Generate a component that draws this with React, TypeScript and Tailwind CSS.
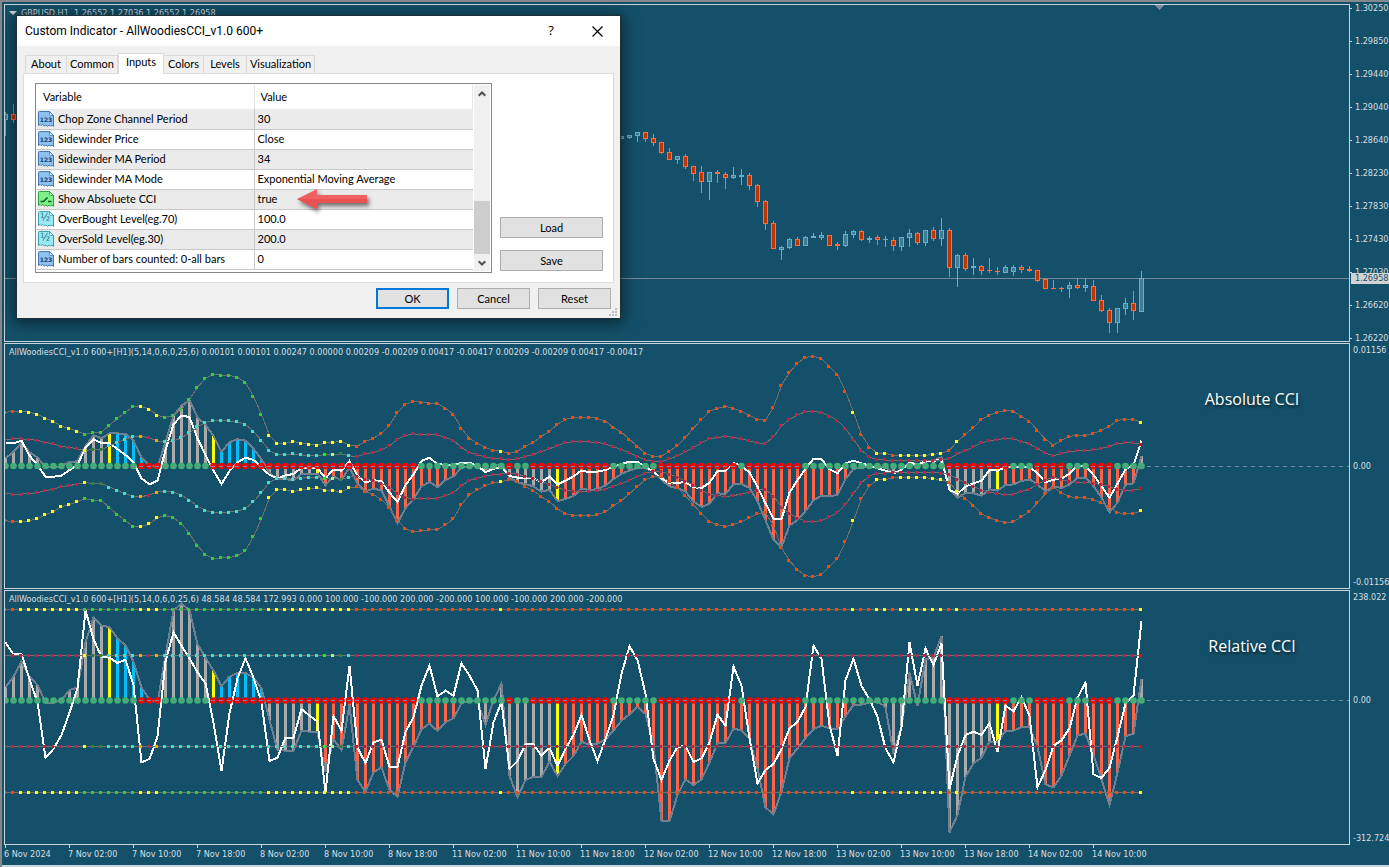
import type { ReactNode } from 'react';
import clsx from 'clsx';

const STEP = 8;

// Curve samples, one per bar, in thirds of a pixel from the top of the pane
const outerBand = [
    217, 214, 214, 217, 223, 235, 244, 259, 265, 274, 283, 277, 277, 256, 235, 217, 199, 199, 208, 226, 232, 226, 208, 178, 142, 115, 103, 106, 106, 112, 127, 169, 223, 286, 310, 310, 304, 310, 313,
    316, 307, 307, 304, 316, 319, 304, 295, 280, 256, 217, 193, 184, 187, 190, 190, 205, 223, 265, 295, 310, 322, 331, 334, 340, 334, 319, 307, 289, 274, 253, 238, 232, 232, 232, 235, 244, 262, 277,
    298, 319, 340, 349, 349, 334, 316, 292, 265, 238, 214, 205, 199, 205, 214, 226, 238, 241, 202, 136, 97, 70, 52, 49, 55, 79, 103, 154, 217, 283, 322, 340, 340, 346, 346, 346, 346, 346, 343, 340,
    331, 304, 283, 262, 238, 226, 217, 211, 214, 229, 244, 271, 298, 316, 301, 289, 286, 286, 280, 271, 259, 241, 238, 238, 247,
];

const cci = [
    307, 275, 230, 275, 300, 353, 353, 345, 315, 308, 172, 97, 122, 126, 160, 182, 230, 308, 343, 353, 212, 76, 56, 76, 178, 218, 257, 304, 275, 264, 264, 278, 310, 405, 495, 497, 497, 437, 440, 440,
    560, 463, 495, 360, 585, 620, 562, 547, 615, 635, 532, 485, 433, 415, 438, 412, 400, 355, 348, 347, 420, 345, 296, 572, 636, 585, 575, 576, 530, 573, 537, 513, 470, 480, 476, 463, 437, 407, 388,
    366, 387, 480, 708, 708, 630, 583, 600, 583, 533, 474, 474, 431, 436, 462, 550, 667, 688, 620, 520, 490, 460, 432, 422, 430, 432, 394, 360, 359, 352, 348, 366, 505, 425, 263, 363, 222, 218, 154,
    742, 690, 575, 535, 518, 470, 470, 438, 437, 427, 426, 485, 598, 607, 572, 512, 451, 446, 510, 583, 660, 563, 454, 446, 282,
];

const turbo = [
    172, 208, 207, 282, 352, 519, 492, 450, 383, 310, 76, 162, 216, 218, 234, 224, 300, 532, 522, 455, 230, 142, 182, 220, 262, 295, 415, 558, 385, 280, 220, 278, 352, 528, 518, 458, 459, 372, 392,
    410, 622, 393, 437, 242, 488, 534, 472, 464, 546, 546, 440, 397, 302, 242, 334, 317, 332, 235, 272, 316, 552, 412, 350, 552, 528, 478, 478, 513, 487, 543, 492, 450, 390, 465, 528, 463, 390, 266,
    184, 225, 327, 522, 585, 527, 486, 483, 531, 520, 472, 389, 422, 245, 302, 460, 595, 555, 537, 492, 430, 411, 366, 182, 222, 420, 512, 286, 221, 303, 343, 395, 490, 532, 425, 172, 302, 191, 240,
    176, 612, 512, 450, 440, 450, 414, 501, 362, 379, 336, 392, 607, 555, 482, 466, 430, 338, 293, 568, 579, 548, 455, 355, 332, 108,
];

const turboAbsolute = [
    310, 310, 302, 347, 375, 410, 410, 407, 390, 375, 322, 298, 309, 310, 327, 345, 367, 415, 433, 422, 330, 253, 227, 231, 295, 345, 392, 432, 393, 367, 353, 360, 382, 405, 415, 406, 402, 384, 383,
    385, 415, 388, 392, 363, 407, 427, 421, 423, 458, 486, 435, 403, 363, 353, 373, 374, 375, 369, 368, 378, 396, 387, 380, 408, 413, 413, 415, 426, 410, 433, 422, 409, 391, 397, 395, 390, 380, 372,
    365, 366, 380, 395, 415, 430, 428, 427, 442, 444, 428, 393, 393, 369, 377, 398, 440, 490, 537, 537, 458, 420, 387, 356, 357, 388, 400, 370, 362, 370, 377, 385, 392, 400, 390, 367, 374, 364, 364,
    357, 450, 461, 440, 430, 422, 390, 392, 382, 381, 380, 381, 400, 427, 419, 417, 400, 377, 378, 405, 438, 473, 430, 388, 375, 302,
];

// [first bar, colour] runs
type Run = [number, string];

const barRuns: Run[] = [
    [0, '#a9a9a9'], [13, '#ffff00'], [14, '#00bfff'], [20, '#a9a9a9'], [26, '#ffff00'], [27, '#00bfff'], [33, '#a9a9a9'], [39, '#ffff00'], [40, '#ff6347'],
    [60, '#a9a9a9'], [69, '#ffff00'], [70, '#ff6347'], [110, '#a9a9a9'], [124, '#ffff00'], [125, '#ff6347'], [142, '#a9a9a9'],
];

const zeroRuns: Run[] = [
    [0, '#3cb371'], [17, '#ff0000'], [20, '#3cb371'], [26, '#ff0000'], [52, '#3cb371'], [63, '#ff0000'], [64, '#3cb371'], [66, '#ff0000'], [76, '#3cb371'], [82, '#ff0000'],
    [92, '#3cb371'], [93, '#ff0000'], [100, '#3cb371'], [118, '#ff0000'], [126, '#3cb371'], [129, '#ff0000'], [133, '#3cb371'], [136, '#ff0000'], [139, '#3cb371'],
];

const outerRuns: Run[] = [
    [0, '#ff4500'], [2, '#ffff00'], [10, '#32cd32'], [17, '#ffff00'], [20, '#32cd32'], [33, '#ffff00'], [44, '#ff4500'], [62, '#ffff00'], [63, '#ff4500'], [106, '#ffff00'],
    [107, '#ff4500'], [109, '#ffff00'], [111, '#ff4500'], [112, '#ffff00'], [118, '#ff4500'], [119, '#ffff00'], [120, '#ff4500'], [142, '#ffff00'],
];

const innerRuns: Run[] = [
    [0, '#dc143c'], [10, '#ffff00'], [11, '#228b22'], [13, '#40e0d0'], [17, '#ffa500'], [18, '#dc143c'], [19, '#ffa500'], [20, '#40e0d0'], [40, '#00ff00'],
    [41, '#98fb98'], [42, '#228b22'], [43, '#40e0d0'], [44, '#dc143c'], [142, '#ff0000'],
];

// first bar, then high, body top, body bottom, low
type Candle = [number, number, number, number, number, 'up' | 'down'];

const candles: Candle[] = [
    [0, 2, 4, 10, 26, 'up'], [1, -6, 4, 10, 13, 'down'], [77, 26, 26, 29, 29, 'up'], [78, 25, 25, 28, 29, 'up'], [79, 22, 22, 26, 32, 'up'],
    [80, 22, 22, 29, 32, 'down'], [81, 24, 28, 33, 36, 'down'], [82, 32, 32, 43, 44, 'down'], [83, 38, 42, 50, 50, 'down'], [84, 46, 46, 50, 54, 'up'],
    [85, 44, 46, 57, 59, 'down'], [86, 56, 56, 64, 71, 'down'], [87, 56, 62, 72, 83, 'down'], [88, 62, 62, 72, 90, 'up'], [89, 60, 62, 64, 73, 'down'],
    [90, 62, 64, 68, 79, 'down'], [91, 57, 65, 68, 69, 'up'], [92, 59, 65, 67, 75, 'up'], [93, 63, 65, 76, 80, 'down'], [94, 74, 75, 92, 97, 'down'],
    [95, 90, 91, 114, 120, 'down'], [96, 111, 113, 139, 139, 'down'], [97, 136, 137, 140, 150, 'up'], [98, 128, 129, 138, 139, 'up'], [99, 127, 129, 136, 136, 'down'],
    [100, 126, 127, 136, 136, 'up'], [101, 123, 126, 128, 128, 'up'], [102, 122, 125, 128, 130, 'up'], [103, 125, 125, 136, 136, 'down'], [104, 132, 134, 136, 140, 'down'],
    [105, 121, 124, 136, 137, 'up'], [106, 120, 121, 125, 128, 'up'], [107, 120, 121, 130, 131, 'down'], [108, 126, 128, 130, 133, 'up'], [109, 125, 127, 130, 135, 'down'],
    [110, 126, 129, 130, 137, 'up'], [111, 127, 130, 136, 141, 'down'], [112, 127, 127, 137, 141, 'up'], [113, 119, 123, 128, 137, 'up'], [114, 122, 123, 133, 135, 'down'],
    [115, 120, 120, 133, 136, 'up'], [116, 117, 120, 129, 131, 'down'], [117, 108, 120, 129, 136, 'up'], [118, 118, 120, 158, 167, 'down'], [119, 144, 145, 158, 177, 'up'],
    [120, 143, 145, 159, 161, 'down'], [121, 148, 156, 158, 165, 'up'], [122, 155, 156, 161, 165, 'down'], [123, 148, 160, 161, 163, 'down'], [124, 157, 161, 162, 165, 'down'],
    [125, 155, 157, 163, 163, 'up'], [126, 155, 157, 162, 166, 'up'], [127, 155, 157, 160, 163, 'down'], [128, 156, 159, 161, 162, 'down'], [129, 160, 160, 171, 172, 'down'],
    [130, 169, 169, 179, 179, 'down'], [131, 170, 178, 179, 179, 'down'], [132, 177, 178, 179, 182, 'down'], [133, 172, 175, 179, 188, 'up'], [134, 168, 175, 178, 179, 'down'],
    [135, 169, 175, 178, 182, 'up'], [136, 170, 176, 191, 191, 'down'], [137, 185, 190, 201, 202, 'down'], [138, 198, 200, 213, 223, 'down'], [139, 198, 198, 213, 223, 'up'],
    [140, 188, 193, 199, 205, 'up'], [141, 181, 193, 201, 210, 'down'], [142, 161, 168, 202, 202, 'up'],
];

const prices = ['1.30250', '1.29850', '1.29440', '1.29040', '1.28640', '1.28230', '1.27830', '1.27430', '1.27030', '1.26620', '1.26220'];

const times = [
    '6 Nov 2024', '7 Nov 02:00', '7 Nov 10:00', '7 Nov 18:00', '8 Nov 02:00', '8 Nov 10:00', '8 Nov 18:00', '11 Nov 02:00', '11 Nov 10:00',
    '11 Nov 18:00', '12 Nov 02:00', '12 Nov 10:00', '12 Nov 18:00', '13 Nov 02:00', '13 Nov 10:00', '13 Nov 18:00', '14 Nov 02:00', '14 Nov 10:00',
];

const colorAt = (runs: Run[], i: number) => {
    let color = runs[0][1];
    for (const [from, c] of runs) if (from <= i) color = c;
    return color;
};

const toPoints = (ys: number[]) => ys.map((y, i) => `${i * STEP + 0.5},${y}`).join(' ');

const BandLine = ({ ys, runs }: { ys: number[]; runs: Run[] }) => (
    <>
        <polyline points={toPoints(ys)} fill="none" stroke="#736e6e" strokeWidth="1" />
        {ys.map((y, i) => (
            <rect key={i} x={i * STEP - 2} y={Math.round(y - 1.5)} width="3" height="3" fill={colorAt(runs, i)} />
        ))}
    </>
);

type CciChartProps = { zero: number; slow: number[]; fast: number[]; inner: number[]; outer: number[] };

const CciChart = ({ zero, slow, fast, inner, outer }: CciChartProps) => {
    const mirror = (ys: number[]) => ys.map((y) => 2 * zero - y);
    const zeroLine = Math.round(zero) - 0.5;
    return (
        <svg className="block h-full w-full" shapeRendering="crispEdges" aria-hidden="true">
            {slow.map((y, i) => (
                <rect key={i} x={i * STEP - 1} y={Math.min(y, zero)} width="3" height={Math.abs(y - zero)} fill={colorAt(barRuns, i)} />
            ))}
            <polyline points={toPoints(slow)} fill="none" stroke="#708090" strokeWidth="2" />
            <polyline points={toPoints(fast)} fill="none" stroke="#ffffff" strokeWidth="2" />
            {slow.map((_, i) => (
                <circle key={i} cx={i * STEP + 0.5} cy={zero - 0.5} r="3.3" fill={colorAt(zeroRuns, i)} shapeRendering="auto" />
            ))}
            <line x1="0" x2="100%" y1={zeroLine} y2={zeroLine} stroke="#778899" strokeDasharray="4 4" strokeDashoffset="2" />
            <BandLine ys={outer} runs={outerRuns} />
            <BandLine ys={mirror(outer)} runs={outerRuns} />
            <BandLine ys={inner} runs={innerRuns} />
            <BandLine ys={mirror(inner)} runs={innerRuns} />
        </svg>
    );
};

const REL_ZERO = 110;
const REL_UNIT = 45.7;
const ABS_ZERO = 122.5;

const relSlow = cci.map((y) => y / 3 - 6);
const absOuter = outerBand.map((y) => y / 3 - 4);
const absInner = absOuter.map((y) => (y + ABS_ZERO) / 2);
const absSlow = relSlow.map((y, i) => ABS_ZERO + ((y - REL_ZERO) / REL_UNIT) * (ABS_ZERO - absInner[i]));

const PriceChart = () => (
    <svg className="block h-full w-full" shapeRendering="crispEdges" aria-hidden="true">
        <line x1="0" x2="100%" y1="273.5" y2="273.5" stroke="#778899" />
        <path d="M1150 0h9l-4.500 5z" fill="#808996" />
        {candles.map(([i, high, top, bottom, low, dir]) => {
            const stroke = dir === 'up' ? '#6cadc9' : '#ff6e3c';
            const fill = dir === 'up' ? '#3e7d96' : '#c43200';
            return (
                <g key={i} transform={`translate(${i * STEP} 105)`}>
                    <rect x="0" y={high} width="1" height={low - high} fill={stroke} />
                    <rect x="-2" y={top} width="5" height={bottom - top} fill={stroke} />
                    {bottom - top > 2 && <rect x="-1" y={top + 1} width="3" height={bottom - top - 2} fill={fill} />}
                </g>
            );
        })}
    </svg>
);

type PaneProps = { className: string; title: string; children: ReactNode; axis: ReactNode; note?: string; marker?: boolean };

const Pane = ({ className, title, children, axis, note, marker }: PaneProps) => (
    <div className={clsx('flex', className)}>
        <section className="relative min-w-0 flex-1 overflow-hidden border border-[#c9d6db]">
            {children}
            <div className="absolute left-1 top-0.5 flex items-center gap-1 whitespace-pre leading-3">
                {marker && (
                    <svg className="h-1 w-2" viewBox="0 0 8 4" aria-hidden="true">
                        <path d="M0 0h8l-4 4z" fill="#d6d6d6" />
                    </svg>
                )}
                <span>{title}</span>
            </div>
            {note && (
                <h2 className="absolute right-0 top-[43px] w-[194px] text-center font-['Open_Sans','Noto_Sans',sans-serif] text-base leading-6 text-white [text-shadow:1px_2px_3px_#000a]">
                    {note}
                </h2>
            )}
        </section>
        <div className="relative flex w-[39px] shrink-0 flex-col justify-between">{axis}</div>
    </div>
);

const tabs = [
    { label: 'About', width: 'w-[42px]' },
    { label: 'Common', width: 'w-[51px]' },
    { label: 'Inputs', width: 'w-[46px]' },
    { label: 'Colors', width: 'w-[40px]' },
    { label: 'Levels', width: 'w-[43px]' },
    { label: 'Visualization', width: 'w-[68px]' },
];

type Kind = 'int' | 'bool' | 'double';

const inputs: { name: string; value: string; kind: Kind }[] = [
    { name: 'Chop Zone Channel Period', value: '30', kind: 'int' },
    { name: 'Sidewinder Price', value: 'Close', kind: 'int' },
    { name: 'Sidewinder MA Period', value: '34', kind: 'int' },
    { name: 'Sidewinder MA Mode', value: 'Exponential Moving Average', kind: 'int' },
    { name: 'Show Absoluete CCI', value: 'true', kind: 'bool' },
    { name: 'OverBought Level(eg.70)', value: '100.0', kind: 'double' },
    { name: 'OverSold Level(eg.30)', value: '200.0', kind: 'double' },
    { name: 'Number of bars counted: 0-all bars', value: '0', kind: 'int' },
];

const kindColors = {
    int: { fill: '#8fc1f0', edge: '#3f78b5', ink: '#0d3f73' },
    bool: { fill: '#7df08a', edge: '#2f9f3f', ink: '#0a5f1a' },
    double: { fill: '#9be8f2', edge: '#3d9fb5', ink: '#1a6f80' },
};

const KindIcon = ({ kind }: { kind: Kind }) => {
    const c = kindColors[kind];
    return (
        <svg className="h-4 w-4 shrink-0" viewBox="0 0 16 16" aria-hidden="true">
            <path d="M.5 1.500q0-1 1-1h10l4 4v11l-1.500-1.500-1.500 1-1.500-1-1.500 1.500-1.500-1.500-1.500 1-2-1.500-1.500 1-1-1-1.500 1z" fill={c.fill} stroke={c.edge} />
            <path d="M11.500.5v3q0 1 1 1h3z" fill="#ffffff" fillOpacity=".6" stroke={c.edge} strokeWidth=".8" />
            {kind === 'bool' && <path d="M2.500 10.500h3l4-4M10 10.500h3.500" fill="none" stroke={c.ink} strokeWidth="1.600" />}
            {kind === 'int' && (
                <text x="8" y="11" textAnchor="middle" fontFamily="DejaVu Sans, sans-serif" fontSize="6" fontWeight="700" fill={c.ink}>
                    123
                </text>
            )}
            {kind === 'double' && (
                <text x="7" y="10" textAnchor="middle" fontFamily="DejaVu Sans, sans-serif" fontSize="10" fill={c.ink}>
                    ½
                </text>
            )}
        </svg>
    );
};

const Chevron = ({ up }: { up?: boolean }) => (
    <svg className="h-[6px] w-2" viewBox="0 0 8 6" aria-hidden="true">
        <path d={up ? 'M.7 4.800 4 1.500l3.300 3.300' : 'M.7 1.200 4 4.500l3.300-3.300'} fill="none" stroke="#505050" strokeWidth="2" />
    </svg>
);

const Button = ({ children, className }: { children: ReactNode; className?: string }) => (
    <button type="button" className={clsx('h-[21px] bg-[#e1e1e1] text-center leading-4', className)}>
        {children}
    </button>
);

const Dialog = () => (
    <div
        role="dialog"
        aria-labelledby="dialog-title"
        className="absolute left-[15px] top-[14px] w-[603px] bg-[#f0f0f0] font-['Lato','Liberation_Sans',sans-serif] text-[11px] text-black shadow-[0_2px_14px_3px_#0008] outline outline-[#1c3038]"
    >
        <header className="flex h-[30px] items-center bg-white pl-2 pr-3">
            <h1 id="dialog-title" className="flex-1 font-['Roboto','Noto_Sans',sans-serif] text-xs">
                Custom Indicator - AllWoodiesCCI_v1.0 600+
            </h1>
            <button type="button" className="w-[22px] font-['Open_Sans','Noto_Sans',sans-serif] text-[13px] font-medium">
                ?
            </button>
            <button type="button" aria-label="Close" className="ml-6 flex w-[22px] justify-center">
                <svg className="h-[11px] w-[11px]" viewBox="0 0 11 11" aria-hidden="true">
                    <path d="M.5.5l10 10M10.500.5l-10 10" stroke="#000" strokeWidth="1.200" />
                </svg>
            </button>
        </header>

        <div role="tablist" className="flex h-[27px] items-end pl-2">
            {tabs.map(({ label, width }) => (
                <button
                    key={label}
                    type="button"
                    role="tab"
                    aria-selected={label === 'Inputs'}
                    className={clsx(
                        'border-[#d9d9d9] text-center',
                        width,
                        label === 'Inputs' ? 'z-10 -mb-px h-[21px] border-x border-t bg-white pb-1' : 'h-[18px] border-r border-t',
                        label === 'About' && 'border-l',
                    )}
                >
                    {label}
                </button>
            ))}
        </div>

        <div className="mx-[6px] flex h-[210px] gap-2 border border-[#dcdcdc] bg-white pl-[11px] pt-[9px]">
            <div className="flex h-[190px] w-[457px] border border-[#828790] p-px">
                <div className="w-[436px]">
                    <table className="w-full table-fixed border-collapse text-left">
                        <thead>
                            <tr className="h-6">
                                <th className="w-[217px] border-r border-[#e5e5e5] pl-[6px] font-normal">Variable</th>
                                <th className="border-r border-[#e5e5e5] pl-[6px] font-normal">Value</th>
                            </tr>
                        </thead>
                        <tbody>
                            {inputs.map(({ name, value, kind }) => (
                                <tr key={name} className="h-5 border-b border-[#c8c8c8] odd:bg-[#ebebeb]">
                                    <td className="border-r border-[#c8c8c8] p-0 pl-px">
                                        <div className="flex items-center gap-1">
                                            <KindIcon kind={kind} />
                                            {name}
                                        </div>
                                    </td>
                                    <td className="relative p-0 pl-[3px]">
                                        {value}
                                        {kind === 'bool' && (
                                            <svg className="absolute -top-0.5 left-[41px] h-7 w-20 drop-shadow-[2px_3px_2px_#0008]" viewBox="0 0 80 28" aria-hidden="true">
                                                <path d="M1 11 21 1v6h50v8H21v6z" fill="#f06060" />
                                                <path d="M1 11h70v4H21v6z" fill="#e85252" />
                                            </svg>
                                        )}
                                    </td>
                                </tr>
                            ))}
                        </tbody>
                    </table>
                </div>
                <div className="ml-px flex w-4 flex-col items-center bg-[#f0f0f0]">
                    <button type="button" aria-label="Scroll up" className="flex h-[18px] items-center">
                        <Chevron up />
                    </button>
                    <div className="mt-[98px] h-[53px] w-full bg-[#cdcdcd]" />
                    <button type="button" aria-label="Scroll down" className="flex h-[17px] items-center">
                        <Chevron />
                    </button>
                </div>
            </div>
            <div className="flex w-[103px] flex-col justify-end gap-3 pb-[11px]">
                <Button className="border border-[#adadad]">Load</Button>
                <Button className="border border-[#adadad]">Save</Button>
            </div>
        </div>

        <footer className="flex h-[35px] items-start justify-end gap-2 pr-[9px] pt-[5px]">
            <Button className="w-[73px] border-2 border-[#0078d7]">OK</Button>
            <Button className="w-[73px] border border-[#adadad]">Cancel</Button>
            <Button className="w-[73px] border border-[#adadad]">Reset</Button>
        </footer>
        <svg className="absolute bottom-0.5 right-[3px] h-2 w-2" viewBox="0 0 8 8" aria-hidden="true">
            <path d="M6 0h2v2h-2zM3 3h2v2h-2zM6 3h2v2h-2zM0 6h2v2h-2zM3 6h2v2h-2zM6 6h2v2h-2z" fill="#bfbfbf" />
        </svg>
    </div>
);

const App = () => {
    return (
        <main className="relative min-h-screen overflow-hidden border-l-2 border-t-2 border-[#85898b] bg-[#145069] font-['DejaVu_Sans_Condensed','DejaVu_Sans',sans-serif] text-[9px] text-[#d8dfe2]">
            <div className="flex flex-col gap-px pl-0.5 pt-0.5">
                <Pane
                    className="h-[338px]"
                    title="GBPUSD,H1  1.26552 1.27036 1.26552 1.26958"
                    marker
                    axis={
                        <>
                            <div className="flex flex-col gap-6">
                                {prices.map((p) => (
                                    <div key={p} className="flex h-[9px] items-center gap-[3px] leading-[9px]">
                                        <span className="h-px w-0.5 bg-[#c9d6db]" />
                                        {p}
                                    </div>
                                ))}
                            </div>
                            <div className="absolute left-px right-0 top-[269px] h-[11px] bg-[#d3d3d3] pl-1 leading-[11px] text-[#145069]">1.26958</div>
                        </>
                    }
                >
                    <PriceChart />
                </Pane>
                <Pane
                    className="h-[246px]"
                    title="AllWoodiesCCI_v1.0 600+[H1](5,14,0,6,0,25,6) 0.00101 0.00101 0.00247 0.00000 0.00209 -0.00209 0.00417 -0.00417 0.00209 -0.00209 0.00417 -0.00417"
                    note="Absolute CCI"
                    axis={
                        <>
                            <span className="pl-[3px] pt-px leading-3">0.01156</span>
                            <span className="pl-[3px] leading-3">0.00</span>
                            <span className="pb-px pl-[3px] leading-3">-0.01156</span>
                        </>
                    }
                >
                    <CciChart zero={ABS_ZERO} slow={absSlow} fast={turboAbsolute.map((y) => y / 3 - 4)} inner={absInner} outer={absOuter} />
                </Pane>
                <Pane
                    className="h-[255px]"
                    title="AllWoodiesCCI_v1.0 600+[H1](5,14,0,6,0,25,6) 48.584 48.584 172.993 0.000 100.000 -100.000 200.000 -200.000 100.000 -100.000 200.000 -200.000"
                    note="Relative CCI"
                    axis={
                        <>
                            <span className="pl-[3px] pt-px leading-3">238.022</span>
                            <span className="pb-9 pl-[3px] leading-3">0.00</span>
                            <span className="pb-px pl-[3px] leading-3">-312.724</span>
                        </>
                    }
                >
                    <CciChart
                        zero={REL_ZERO}
                        slow={relSlow}
                        fast={turbo.map((y) => y / 3 - 6)}
                        inner={cci.map(() => REL_ZERO - REL_UNIT)}
                        outer={cci.map(() => REL_ZERO - 2 * REL_UNIT)}
                    />
                </Pane>
            </div>
            <div className="flex h-[22px] overflow-hidden border-b-2 border-[#c9d6db] pl-[3px]">
                {times.map((t) => (
                    <div key={t} className="w-16 shrink-0 whitespace-nowrap">
                        <div className="h-[3px] w-px bg-[#c9d6db]" />
                        <div className="-ml-px leading-3">{t}</div>
                    </div>
                ))}
            </div>
            <Dialog />
        </main>
    );
};

export default App;
